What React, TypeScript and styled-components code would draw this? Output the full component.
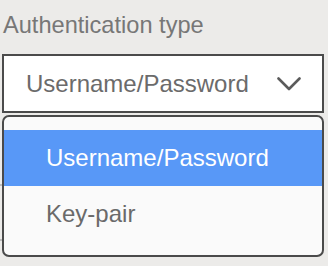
import styled, { createGlobalStyle } from 'styled-components';

const GlobalStyle = createGlobalStyle`
	html, body {
		margin: 0;
		padding: 0;
		background-color: #ecebe9;
		font-family: "Liberation Sans", Arial, sans-serif;
	}
`;

const options = ['Username/Password', 'Key-pair'];
const selected = 'Username/Password';

const App = () => {
	return (
		<Page>
			<GlobalStyle />
			<Label>Authentication type</Label>
			<SelectBox type="button">
				<span>{selected}</span>
				<Chevron width="24" height="14" viewBox="0 0 24 14">
					<path d="M1.5 1.5 L12 12 L22.5 1.5" fill="none" stroke="#5b5b5b" strokeWidth="2.6" strokeLinecap="round" strokeLinejoin="round" />
				</Chevron>
			</SelectBox>
			<Divider $top={73} />
			<Divider $top={55} />
			<Menu>
				{options.map((option) => (
					<Option key={option} $active={option === selected}>
						{option}
					</Option>
				))}
			</Menu>
		</Page>
	);
};

export default App;

const Page = styled.div`
	position: relative;
	height: 266px;
	padding: 11px 4px 0 2px;
	box-sizing: border-box;
	overflow: hidden;
`;

const Label = styled.div`
	margin-left: 1px;
	font-size: 23.6px;
	line-height: 28px;
	color: #777777;
`;

const SelectBox = styled.button`
	display: flex;
	align-items: center;
	justify-content: space-between;
	width: 322px;
	height: 59px;
	margin-top: 15px;
	padding: 0 21px 0 22px;
	box-sizing: border-box;
	background-color: #ffffff;
	border: 2px solid #4b4b4b;
	border-radius: 0;
	font-family: inherit;
	font-size: 24px;
	line-height: 28px;
	color: #6b6b6b;
	cursor: pointer;
`;

const Chevron = styled.svg`
	display: block;
	flex-shrink: 0;
`;

const Divider = styled.div<{ $top: number }>`
	height: 2px;
	margin-top: ${(p) => p.$top - 2}px;
	margin-left: -2px;
	background-color: #bdbdbd;
`;

const Menu = styled.div`
	position: absolute;
	top: 115px;
	left: 2px;
	width: 322px;
	height: 142px;
	box-sizing: border-box;
	padding: 13px 0;
	background-color: #fafafa;
	border: 2px solid #4a4a4a;
	border-radius: 7px;
`;

const Option = styled.div<{ $active: boolean }>`
	height: 56px;
	padding-left: 42px;
	font-size: 24px;
	line-height: 56px;
	color: ${(p) => (p.$active ? '#ffffff' : '#6a6a6a')};
	background-color: ${(p) => (p.$active ? '#5898f7' : 'transparent')};
`;
